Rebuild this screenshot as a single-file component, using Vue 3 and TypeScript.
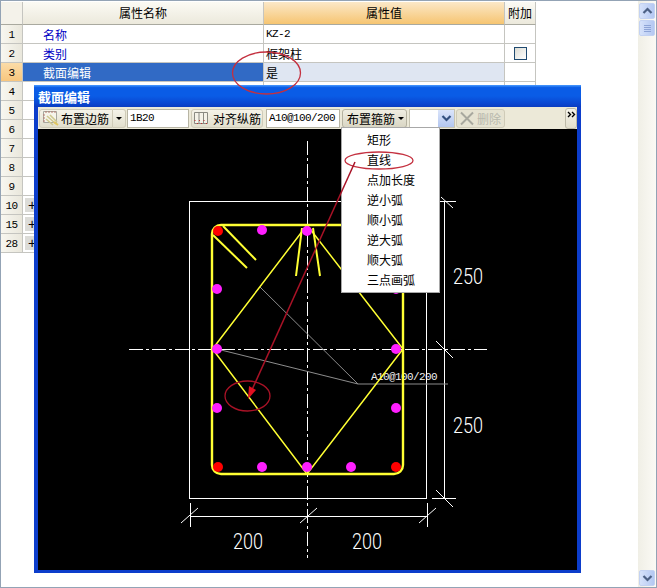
<script setup lang="ts">
interface Row {
  no: string
  name: string
  value: string
  state?: 'selected'
  check?: boolean
  expand?: boolean
}

const rows: Row[] = [
  { no: '1', name: '名称', value: 'KZ-2' },
  { no: '2', name: '类别', value: '框架柱', check: true },
  { no: '3', name: '截面编辑', value: '是', state: 'selected' },
  { no: '4', name: '', value: '' },
  { no: '5', name: '', value: '' },
  { no: '6', name: '', value: '' },
  { no: '7', name: '', value: '' },
  { no: '8', name: '', value: '' },
  { no: '9', name: '', value: '' },
  { no: '10', name: '', value: '', expand: true },
  { no: '15', name: '', value: '', expand: true },
  { no: '28', name: '', value: '', expand: true },
]

const menuItems = ['矩形', '直线', '点加长度', '逆小弧', '顺小弧', '逆大弧', '顺大弧', '三点画弧']

const redDots = [
  [218, 231],
  [218, 467],
  [396, 467],
  [396, 231],
]
const pinkDots = [
  [262, 230],
  [307, 231],
  [352, 230],
  [217, 289],
  [217, 349],
  [217, 408],
  [396, 289],
  [396, 349],
  [396, 408],
  [262, 467],
  [307, 467],
  [351, 467],
]
const ticks = [
  [181, 523, 198, 508],
  [300, 523, 317, 508],
  [419, 523, 436, 508],
  [441, 197, 453, 208],
  [436, 341, 453, 358],
  [436, 490, 453, 507],
]
const dimLines = [
  [190, 516, 427, 516],
  [190, 503, 190, 527],
  [427, 503, 427, 527],
  [444.5, 202, 444.5, 498],
  [427, 201.5, 456, 201.5],
  [432, 498.5, 456, 498.5],
]
const hooks = [
  [213, 235, 247, 268],
  [223, 226, 256, 260],
  [302, 228, 296, 276],
  [313, 228, 320, 276],
]
const labels = [
  { x: 233, y: 549, t: '200' },
  { x: 352, y: 549, t: '200' },
  { x: 453, y: 284, t: '250' },
  { x: 453, y: 433, t: '250' },
]
</script>

<template>
  <div class="page">
    <div class="sheet">
      <div class="table">
        <div class="head corner"></div>
        <div class="head">属性名称</div>
        <div class="head active">属性值</div>
        <div class="head">附加</div>
        <template v-for="r in rows" :key="r.no">
          <div class="no" :class="{ current: r.state === 'selected' }">{{ r.no }}</div>
          <div class="cell name" :class="{ selected: r.state === 'selected' }">
            <span v-if="r.expand" class="plus">+</span>{{ r.name }}
          </div>
          <div class="cell value" :class="{ tint: r.state === 'selected', latin: r.no === '1' }">{{ r.value }}</div>
          <div class="cell extra"><span v-if="r.check" class="check"></span></div>
        </template>
      </div>
    </div>

    <div class="scrollbar">
      <div class="sb-btn">
        <svg width="11" height="8" viewBox="0 0 11 8"><path d="M1.5 6 5.5 2l4 4" fill="none" stroke="#4d6185" stroke-width="2.2" /></svg>
      </div>
      <div class="sb-btn thumb">
        <svg width="9" height="9" viewBox="0 0 9 9"><path d="M1 1.5h7M1 3.5h7M1 5.5h7M1 7.5h7" stroke="#8ea4d6" stroke-width="1" /></svg>
      </div>
      <div class="sb-track"></div>
      <div class="sb-btn">
        <svg width="11" height="8" viewBox="0 0 11 8"><path d="M1.5 2 5.5 6l4-4" fill="none" stroke="#4d6185" stroke-width="2.2" /></svg>
      </div>
    </div>

    <div class="window">
      <div class="title">截面编辑</div>
      <div class="toolbar">
        <div class="tb split">
          <svg class="ico" width="18" height="16" viewBox="0 0 18 16">
            <path d="M1.5 1.5h13v11h-13z" fill="#f6f4ea" stroke="#a8a89e" />
            <path d="M4 1v2M7 1v2M10 1v2M13 1v2M1 5h2M1 8h2M1 11h2" stroke="#b87a70" />
            <path d="m5 6 9 8M4 9l7 6M8 5l7 7" stroke="#cfc88e" stroke-width="1.6" />
            <path d="m12 12 4 3" stroke="#e2c860" stroke-width="2" />
          </svg>
          <span>布置边筋</span>
        </div>
        <div class="tb arrow"><i></i></div>
        <div class="input w62">1B20</div>
        <div class="tb align">
          <svg class="ico" width="15" height="15" viewBox="0 0 15 15">
            <path d="M.5 1.5h13v11H.5zM5 1.5v11M9.500 1.500v11" fill="#f4f2e8" stroke="#8a8a82" />
            <path d="M.5 9.500h1M5 9.500h1M9.500 9.500h1M3 12.500h1M7 12.500h1M12 12.500h1" stroke="#c03030" />
          </svg>
          <span>对齐纵筋</span>
        </div>
        <div class="input w74">A10@100/200</div>
        <div class="tb stirrup"><span>布置箍筋</span><i></i></div>
        <div class="select">
          <div class="sel-btn">
            <svg width="11" height="8" viewBox="0 0 11 8"><path d="M1.500 2 5.500 6l4-4" fill="none" stroke="#33507f" stroke-width="2.200" /></svg>
          </div>
        </div>
        <div class="tb del">
          <svg width="17" height="15" viewBox="0 0 17 15"><path d="m2 1.500 12 12M14 1.500l-12 12" stroke="#a8a89e" stroke-width="2" /></svg>
          <span>删除</span>
        </div>
        <div class="spacer"></div>
        <div class="more">
          <svg width="9" height="7" viewBox="0 0 9 7"><path d="m1 1 2.500 2.500L1 6M5 1l2.500 2.500L5 6" fill="none" stroke="#000" stroke-width="1.400" /></svg>
        </div>
      </div>
      <div class="canvas">
        <svg class="drawing" width="539" height="440" viewBox="38 129 539 440">
          <g stroke="#fff" stroke-width="1" fill="none" shape-rendering="crispEdges">
            <rect x="189.500" y="201.500" width="237" height="297" />
            <line x1="307.500" y1="141" x2="307.500" y2="558" stroke-dasharray="14 3 3 3" />
            <line x1="129" y1="349.500" x2="487" y2="349.500" stroke-dasharray="14 3 3 3" />
            <line v-for="(d, i) in dimLines" :key="i" :x1="d[0]" :y1="d[1]" :x2="d[2]" :y2="d[3]" />
          </g>
          <g stroke="#fff" stroke-width="1">
            <line v-for="(t, i) in ticks" :key="i" :x1="t[0]" :y1="t[1]" :x2="t[2]" :y2="t[3]" />
          </g>
          <g stroke="#8c8c8c" stroke-width="1" fill="none">
            <path d="M217 349 358 384h90M260 287l98 97" />
          </g>
          <text class="rebar-label" x="371" y="380">A10@100/200</text>
          <path d="M307 225 212.500 349 307 474 403 349Z" fill="none" stroke="#ffff33" stroke-width="1.500" />
          <rect x="212" y="225" width="191" height="249" rx="9" fill="none" stroke="#ffff33" stroke-width="2.400" />
          <g stroke="#ffff33" stroke-width="2">
            <line v-for="(h, i) in hooks" :key="i" :x1="h[0]" :y1="h[1]" :x2="h[2]" :y2="h[3]" />
          </g>
          <circle v-for="(p, i) in pinkDots" :key="'p' + i" :cx="p[0]" :cy="p[1]" r="5" fill="#ff1fff" />
          <circle v-for="(p, i) in redDots" :key="'r' + i" :cx="p[0]" :cy="p[1]" r="5" fill="#ff0000" />
          <text
            v-for="(l, i) in labels"
            :key="'l' + i"
            class="dim"
            :x="l.x"
            :y="l.y"
            textLength="30"
            lengthAdjust="spacingAndGlyphs"
          >{{ l.t }}</text>
        </svg>
      </div>
      <div class="menu">
        <div v-for="m in menuItems" :key="m" class="menu-item">{{ m }}</div>
      </div>
    </div>

    <svg class="notes" width="657" height="588" viewBox="0 0 657 588">
      <g fill="none" stroke="#c4303f" stroke-width="1.300">
        <ellipse cx="266.500" cy="73" rx="34" ry="21" />
        <ellipse cx="379" cy="160.500" rx="34" ry="8.500" />
      </g>
      <g fill="none" stroke="#a81226" stroke-width="1.300">
        <ellipse cx="247.500" cy="396" rx="22.500" ry="15" />
      </g>
      <line x1="355" y1="162" x2="251" y2="392" stroke="#a81226" stroke-width="1.500" />
      <path d="M248 399 249 386 256 390Z" fill="#e01020" />
    </svg>
  </div>
</template>

<style>
html,
body {
  margin: 0;
  background: #fff;
}
</style>

<style scoped>
.page {
  position: relative;
  width: 657px;
  height: 588px;
  box-sizing: border-box;
  display: flex;
  overflow: hidden;
  background: #fff;
  border: 1px solid #93a3b5;
  font-family: "Noto Sans CJK SC", "Liberation Sans", sans-serif;
  font-size: 12px;
  color: #000;
}
.sheet {
  flex: 1;
  padding-top: 1px;
  min-width: 0;
}
.table {
  display: grid;
  grid-template-columns: 22px 241px 241px 31px;
  grid-template-rows: 23px repeat(12, 19px);
  width: 535px;
}
.head {
  display: flex;
  align-items: center;
  justify-content: center;
  background: linear-gradient(#fbfaf4, #ece9dc);
  border-right: 1px solid #c5c5c0;
  border-bottom: 1px solid #a9a99f;
  box-sizing: border-box;
  line-height: 1;
}
.head.corner {
  background: #f4f2ea;
}
.head.active {
  background: linear-gradient(#fbe8c8, #f6c572);
}
.no {
  display: flex;
  align-items: center;
  justify-content: center;
  box-sizing: border-box;
  padding-top: 1px;
  background: linear-gradient(90deg, #f8f7f0, #e9e7dc);
  border-right: 1px solid #c5c5c0;
  border-bottom: 1px solid #c5c5c0;
  font-family: "Liberation Mono", monospace;
  font-size: 11px;
  letter-spacing: -0.6px;
}
.no.current {
  background: linear-gradient(#fbdca8, #f8c67e);
}
.cell {
  box-sizing: border-box;
  display: flex;
  align-items: center;
  padding-top: 1px;
  border-right: 1px solid #c5c5c0;
  border-bottom: 1px solid #c5c5c0;
  line-height: 1;
}
.name {
  padding-left: 20px;
  color: #0000c4;
  position: relative;
}
.name.selected {
  background: #316ac5;
  color: #fff;
}
.value {
  padding-left: 2px;
}
.value.latin {
  font-family: "Liberation Mono", monospace;
  font-size: 11px;
  letter-spacing: -0.6px;
}
.value.tint {
  background: #dfe6f2;
}
.extra {
  justify-content: center;
}
.check {
  width: 11px;
  height: 11px;
  border: 1px solid #1f4a70;
  background: linear-gradient(135deg, #dcdcd4, #fff);
}
.plus {
  position: absolute;
  left: 2px;
  top: 2px;
  width: 14px;
  height: 14px;
  display: flex;
  align-items: center;
  justify-content: center;
  background: #dcdcd8;
  color: #000;
  font-family: "Liberation Sans", sans-serif;
  font-size: 14px;
}
.scrollbar {
  width: 18px;
  display: flex;
  flex-direction: column;
  align-items: center;
  gap: 1px;
  padding: 2px 0 1px;
  background: linear-gradient(90deg, #f0efe6, #fbfaf5);
}
.sb-btn {
  width: 16px;
  height: 16px;
  display: flex;
  align-items: center;
  justify-content: center;
  border: 1px solid #c3d2f2;
  border-radius: 2px;
  box-sizing: border-box;
  background: linear-gradient(90deg, #d6e2fa, #b4c8f2);
}
.sb-track {
  flex: 1;
}
.window {
  position: absolute;
  left: 33px;
  top: 84px;
  width: 547px;
  height: 488px;
  box-sizing: border-box;
  display: flex;
  flex-direction: column;
  padding: 0 4px 3px 4px;
  background: #0c3dcb;
}
.title {
  height: 22px;
  margin: 0 -4px;
  padding: 0 0 0 4px;
  box-sizing: border-box;
  display: flex;
  align-items: center;
  color: #fff;
  font-size: 13px;
  font-weight: 700;
  background: linear-gradient(#4a9bff 0, #0a5ce6 12%, #0a5ce6 50%, #0a46d0 85%, #0a3cc0);
}
.toolbar {
  height: 22px;
  flex: none;
  box-sizing: border-box;
  display: flex;
  align-items: center;
  padding-left: 1px;
  background: #ece9d8;
}
.tb {
  height: 19px;
  box-sizing: border-box;
  display: flex;
  align-items: center;
  border: 1px solid #cfcbb8;
  border-radius: 3px;
  background: linear-gradient(#f5f3e9, #e2dfcd);
  white-space: nowrap;
}
.split {
  width: 74px;
  padding-left: 2px;
  gap: 1px;
  border-radius: 3px 0 0 3px;
}
.ico {
  flex: none;
}
.arrow {
  width: 13px;
  justify-content: center;
  border-radius: 0 3px 3px 0;
  border-left: 0;
}
.arrow i,
.stirrup i {
  width: 0;
  height: 0;
  border: 3px solid transparent;
  border-top: 3px solid #000;
  border-bottom: 0;
}
.input {
  height: 19px;
  box-sizing: border-box;
  padding-left: 2px;
  display: flex;
  align-items: center;
  background: #fff;
  border: 1px solid #b8b5a4;
  font-family: "Liberation Mono", monospace;
  font-size: 11px;
  letter-spacing: -0.6px;
}
.w62 {
  width: 62px;
  margin-left: 1px;
}
.align {
  width: 72px;
  margin-left: 2px;
  padding-left: 2px;
  gap: 4px;
}
.w74 {
  width: 74px;
  margin-left: 3px;
}
.stirrup {
  width: 65px;
  margin-left: 2px;
  padding-left: 4px;
  gap: 3px;
  background: linear-gradient(#f0eee2, #d9d6c4);
  border-color: #b5b2a0;
}
.select {
  width: 46px;
  height: 19px;
  margin-left: 2px;
  box-sizing: border-box;
  display: flex;
  justify-content: flex-end;
  background: #fff;
  border: 1px solid #c7c4b2;
}
.sel-btn {
  width: 16px;
  display: flex;
  align-items: center;
  justify-content: center;
  background: linear-gradient(#dbe5fb, #b3c6ef);
}
.del {
  width: 49px;
  margin-left: 1px;
  padding-left: 2px;
  gap: 1px;
  color: #b8b8ad;
  background: #e6e3d2;
}
.spacer {
  flex: 1;
}
.more {
  width: 12px;
  height: 21px;
  box-sizing: border-box;
  padding-top: 2px;
  display: flex;
  justify-content: center;
  align-items: flex-start;
  border: 1px solid #bdbaa8;
  border-radius: 3px;
  background: linear-gradient(#f5f3e9, #e2dfcd);
}
.canvas {
  flex: 1;
  min-height: 0;
  background: #000;
}
.drawing {
  display: block;
}
.rebar-label {
  fill: #f0f0f0;
  font-family: "Liberation Mono", monospace;
  font-size: 11px;
  letter-spacing: -0.6px;
}
.dim {
  fill: #ffffff;
  font-family: Roboto, "Liberation Sans", sans-serif;
  font-size: 22px;
  font-weight: 300;
}
.menu {
  position: absolute;
  left: 307px;
  top: 42px;
  width: 99px;
  height: 166px;
  box-sizing: border-box;
  padding-top: 2px;
  background: #fff;
  border: 1px solid #a8a8a8;
}
.menu-item {
  height: 20px;
  padding-left: 25px;
  display: flex;
  align-items: center;
  line-height: 1;
}
.notes {
  position: absolute;
  left: -1px;
  top: -1px;
  pointer-events: none;
}
</style>
